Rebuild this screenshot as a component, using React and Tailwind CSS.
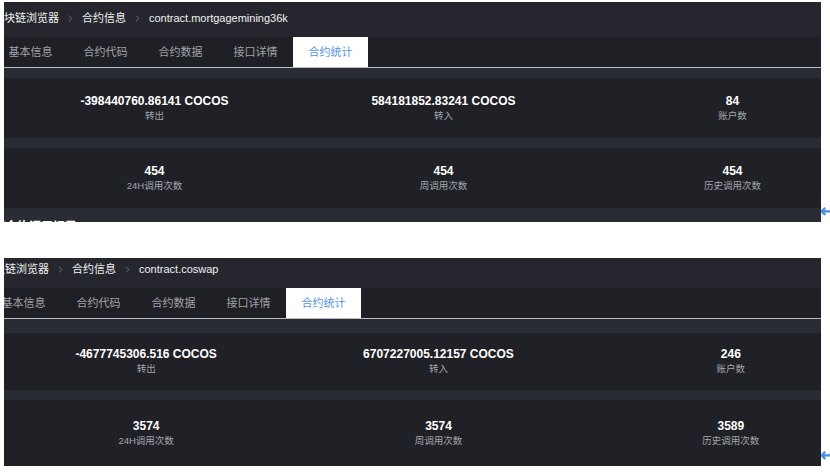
import { ChevronRight } from "lucide-react";

const font = { fontFamily: '"Liberation Sans", "Noto Sans CJK SC", sans-serif' };

const tabs = ["基本信息", "合约代码", "合约数据", "接口详情", "合约统计"];

const panels = [
  {
    contract: "contract.mortgagemining36k",
    crumbClass: "h-[35px] pt-[9px] ml-[-11px]",
    tabsClass: "ml-[-11px]",
    gridClass: "ml-[6px] w-[867px]",
    topStrip: "h-[10px]",
    rowA: "h-[60px]",
    rowB: "h-[60px]",
    top: [
      { value: "-398440760.86141 COCOS", label: "转出" },
      { value: "584181852.83241 COCOS", label: "转入" },
      { value: "84", label: "账户数" },
    ],
    bottom: [
      { value: "454", label: "24H调用次数" },
      { value: "454", label: "周调用次数" },
      { value: "454", label: "历史调用次数" },
    ],
    tail: true,
  },
  {
    contract: "contract.coswap",
    crumbClass: "h-[30px] pt-[4px] ml-[-21px]",
    tabsClass: "ml-[-18px]",
    gridClass: "ml-[-4px] w-[877px]",
    topStrip: "h-[14px]",
    rowA: "h-[57px]",
    rowB: "h-[66px]",
    top: [
      { value: "-4677745306.516 COCOS", label: "转出" },
      { value: "6707227005.12157 COCOS", label: "转入" },
      { value: "246", label: "账户数" },
    ],
    bottom: [
      { value: "3574", label: "24H调用次数" },
      { value: "3574", label: "周调用次数" },
      { value: "3589", label: "历史调用次数" },
    ],
    tail: false,
  },
];

function StatRow({ items, gridClass, rowClass }) {
  return (
    <div className={`${rowClass} bg-[#202127] flex items-center`}>
      <div className={`${gridClass} shrink-0 grid grid-cols-3`}>
        {items.map((s, i) => (
          <div key={i} className="flex flex-col items-center">
            <p className="text-[12px] leading-[15px] font-bold text-white">{s.value}</p>
            <p className="text-[9.5px] leading-[14px] text-[#a3a5ac]">{s.label}</p>
          </div>
        ))}
      </div>
    </div>
  );
}

function Panel({ p }) {
  return (
    <div className="flex">
      <div className="w-[4px] shrink-0" />
      <div className="w-[817px] shrink-0 overflow-hidden bg-[#2a2c34]">
        {/* breadcrumb */}
        <div className={`${p.crumbClass} bg-[#26272e] flex items-start text-[11px] leading-[14px] text-[#f0f0f0] whitespace-nowrap`}>
          <span>区块链浏览器</span>
          <ChevronRight size={11} className="text-[#8a8c92] mx-[6px] mt-[2px]" strokeWidth={1.5} />
          <span>合约信息</span>
          <ChevronRight size={11} className="text-[#8a8c92] mx-[6px] mt-[2px]" strokeWidth={1.5} />
          <span>{p.contract}</span>
        </div>

        {/* tabs */}
        <div className="bg-[#1f2025] border-b border-[#b9bcc3]">
          <div className={`${p.tabsClass} flex h-[30px]`}>
            {tabs.map((t, i) => (
              <div
                key={t}
                className={`w-[75px] shrink-0 flex items-center justify-center text-[11px] ${
                  i === 4 ? "bg-white text-[#5a95e0]" : "text-[#a0a2a8]"
                }`}
              >
                {t}
              </div>
            ))}
          </div>
        </div>

        <div className={p.topStrip} />
        <StatRow items={p.top} gridClass={p.gridClass} rowClass={p.rowA} />
        <div className="h-[10px]" />
        <StatRow items={p.bottom} gridClass={p.gridClass} rowClass={p.rowB} />
        {p.tail && (
          <div className="h-[14px] overflow-hidden">
            <p className="ml-[-11px] pt-[10px] text-[12px] font-bold text-white whitespace-nowrap">区合约调用记录</p>
          </div>
        )}
      </div>
      <div className="flex-1 flex flex-col justify-end pb-[2px] overflow-hidden">
        <span className="text-[18px] leading-[18px] font-bold text-[#4a90e2] ml-[-1px]">↵</span>
      </div>
    </div>
  );
}

export default function App() {
  return (
    <div style={font} className="w-[830px] h-[474px] bg-white overflow-hidden pt-[2px]">
      <Panel p={panels[0]} />
      <div className="h-[36px]" />
      <Panel p={panels[1]} />
    </div>
  );
}
